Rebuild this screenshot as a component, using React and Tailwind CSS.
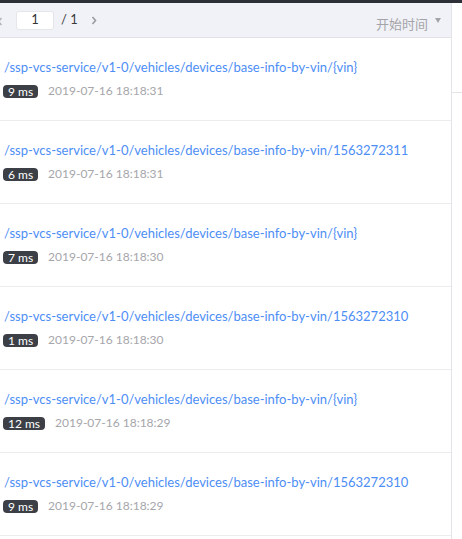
import React from "react";

const rows = [
  { path: "/ssp-vcs-service/v1-0/vehicles/devices/base-info-by-vin/{vin}", ms: "9 ms", time: "2019-07-16 18:18:31" },
  { path: "/ssp-vcs-service/v1-0/vehicles/devices/base-info-by-vin/1563272311", ms: "6 ms", time: "2019-07-16 18:18:31" },
  { path: "/ssp-vcs-service/v1-0/vehicles/devices/base-info-by-vin/{vin}", ms: "7 ms", time: "2019-07-16 18:18:30" },
  { path: "/ssp-vcs-service/v1-0/vehicles/devices/base-info-by-vin/1563272310", ms: "1 ms", time: "2019-07-16 18:18:30" },
  { path: "/ssp-vcs-service/v1-0/vehicles/devices/base-info-by-vin/{vin}", ms: "12 ms", time: "2019-07-16 18:18:29" },
  { path: "/ssp-vcs-service/v1-0/vehicles/devices/base-info-by-vin/1563272310", ms: "9 ms", time: "2019-07-16 18:18:29" },
];

export default function App() {
  return (
    <div
      className="w-[462px] h-[539px] overflow-hidden bg-white flex flex-col"
      style={{ fontFamily: 'Lato, "Noto Sans CJK SC", sans-serif' }}
    >
      <div className="h-[3px] bg-[#2d3036] shrink-0" />
      <div className="flex flex-1 min-h-0">
        <div className="w-[452px] shrink-0 border-r border-[#e4e4e8] flex flex-col">
          <div className="h-[35px] shrink-0 bg-[#f1f2f7] border-b border-[#e2e2e8] flex items-center relative">
            <svg className="absolute left-[-3px] top-[14px]" width="6" height="9" viewBox="0 0 6 9">
              <path d="M4.5 1 L1.5 4.5 L4.5 8" fill="none" stroke="#b4b4ba" strokeWidth="1.6" />
            </svg>
            <div className="ml-[16px] w-[38px] h-[19px] bg-white rounded-[3px] border border-[#e6e6ea] flex items-center justify-center text-[13px] text-[#333]">
              1
            </div>
            <span className="ml-[7px] text-[13px] text-[#3b3b3b]">/ 1</span>
            <svg className="ml-[13px]" width="6" height="9" viewBox="0 0 6 9">
              <path d="M1.5 1 L4.5 4.5 L1.5 8" fill="none" stroke="#9a9aa0" strokeWidth="1.6" />
            </svg>
            <div className="ml-auto mr-[10px] flex items-start text-[#a4a4a8] text-[13px] mt-[9px]">
              <span>开始时间</span>
              <svg className="ml-[7px] mt-[3px]" width="6" height="5" viewBox="0 0 6 5">
                <path d="M0 0 L6 0 L3 5 Z" fill="#a4a4a8" />
              </svg>
            </div>
          </div>
          {rows.map((r, i) => (
            <div key={i} className="h-[83px] shrink-0 border-b border-[#ececef] pl-[4px] pt-[19px]">
              <div className="text-[13px] leading-[20px] text-[#4d8ef5]">{r.path}</div>
              <div className="flex items-center mt-[6px] h-[16px]">
                <span className="bg-[#3c3f46] text-white text-[12px] leading-[13px] rounded-[4px] px-[5px] ml-[-1px]">
                  {r.ms}
                </span>
                <span className="ml-[10px] text-[12px] text-[#a6a6ab]">{r.time}</span>
              </div>
            </div>
          ))}
        </div>
        <div className="flex-1 flex flex-col">
          <div className="h-[90px] border-b border-[#e4e4e8]" />
        </div>
      </div>
    </div>
  );
}
